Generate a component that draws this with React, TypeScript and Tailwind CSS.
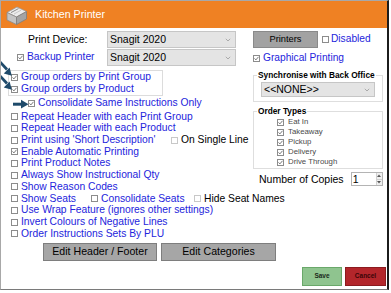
import React from "react";

function Box({ checked = false, light = false }: { checked?: boolean; light?: boolean }) {
  return (
    <svg width="7" height="7" viewBox="0 0 7 7" className="shrink-0">
      <rect x="0.5" y="0.5" width="6" height="6" fill="#fff" stroke={light ? "#c8c8c8" : "#8c8c8c"} />
      {checked && (
        <path d="M1.5 3.4 L2.9 4.9 L5.5 1.8" fill="none" stroke="#6a6a6a" strokeWidth="0.9" />
      )}
    </svg>
  );
}

function Opt({ label, checked = false }: { label: string; checked?: boolean }) {
  return (
    <div className="flex items-center gap-[3px] h-[11.7px]">
      <Box checked={checked} />
      <span className="text-[10.3px] leading-none text-[#2424dc] whitespace-nowrap">{label}</span>
    </div>
  );
}

function Chevron() {
  return (
    <svg width="6" height="4" viewBox="0 0 6 4" className="shrink-0">
      <path d="M0.8 0.8 L3 3 L5.2 0.8" fill="none" stroke="#9a9a9a" strokeWidth="0.8" />
    </svg>
  );
}

function Select({ value, w, h }: { value: string; w: string; h: string }) {
  return (
    <div
      className={`${w} ${h} shrink-0 flex items-center justify-between bg-[#e4e4e4] border border-[#c6c6c6] pl-[2px] pr-[4px] text-[10.5px] leading-none text-black`}
    >
      <span className="whitespace-nowrap">{value}</span>
      <Chevron />
    </div>
  );
}

function PrinterIcon() {
  return (
    <svg width="23" height="23" viewBox="0 0 23 23">
      <path d="M2 9.5 L12 4 L21.5 8.5 L11.5 14 Z" fill="#ececec" stroke="#9a9a9a" strokeWidth="0.8" strokeLinejoin="round" />
      <path d="M2 9.5 L11.5 14 L11.5 21.5 L2 17 Z" fill="#c4c4c4" stroke="#8a8a8a" strokeWidth="0.8" strokeLinejoin="round" />
      <path d="M11.5 14 L21.5 8.5 L21.5 16 L11.5 21.5 Z" fill="#a4a4a4" stroke="#7e7e7e" strokeWidth="0.8" strokeLinejoin="round" />
      <path d="M6 9.6 L13.5 5.6" stroke="#8a8a8a" strokeWidth="1" />
      <path d="M9 11 L16 7.2" stroke="#bdbdbd" strokeWidth="0.8" />
    </svg>
  );
}

function Arrows() {
  return (
    <svg width="30" height="50" viewBox="0 0 30 50" className="absolute left-0 top-[59px]">
      <path d="M-1 2 L6 9.5" stroke="#1e4a6a" strokeWidth="2.8" />
      <path d="M10.8 15.8 L8.6 7.6 L2.8 13.4 Z" fill="#1e4a6a" />
      <path d="M-1 16 L6 23.5" stroke="#1e4a6a" strokeWidth="2.8" />
      <path d="M10.8 29.8 L8.6 21.6 L2.8 27.4 Z" fill="#1e4a6a" />
      <path d="M12 44.2 L21 44.2" stroke="#1e4a6a" strokeWidth="3" />
      <path d="M27.5 44.2 L20 39.8 L20 48.6 Z" fill="#1e4a6a" />
    </svg>
  );
}

export default function App() {
  return (
    <div className="w-[391px] h-[293px] bg-white font-['Liberation_Sans',Arial,sans-serif]">
      <div className="relative w-[389px] h-[290px] bg-white border-l border-t border-[#a8a8a8] border-r-2 border-r-[#1c1c1c] border-b border-b-[#7a7a7a] flex flex-col">
        {/* title bar */}
        <div className="h-[27px] bg-[#ef8123] flex items-center pl-[4px] gap-[8px] shrink-0">
          <PrinterIcon />
          <span className="text-white text-[10.7px] leading-none ml-[-1px]">Kitchen Printer</span>
        </div>

        <div className="flex">
          {/* left column */}
          <div className="w-[252px] flex flex-col shrink-0">
            <div className="mt-[3px] h-[17px] flex items-center">
              <div className="w-[106px] shrink-0 pl-[27px] text-[10.5px] leading-none text-black">Print Device:</div>
              <Select value="Snagit 2020" w="w-[129px]" h="h-[17px]" />
            </div>
            <div className="mt-[1px] h-[17px] flex items-center">
              <div className="w-[106px] shrink-0 pl-[16px] flex items-center gap-[3px]">
                <Box checked />
                <span className="text-[10.3px] leading-none text-[#2424dc] whitespace-nowrap">Backup Printer</span>
              </div>
              <Select value="Snagit 2020" w="w-[129px]" h="h-[17px]" />
            </div>

            <div className="mt-[4px] ml-[7px] w-[155px] border border-[#dcdcdc] pl-[2px]">
              <div className="flex items-center gap-[3px] h-[12px]">
                <Box checked />
                <span className="text-[10.3px] leading-none text-[#2424dc] whitespace-nowrap">Group orders by Print Group</span>
              </div>
              <div className="flex items-center gap-[3px] h-[12px]">
                <Box checked />
                <span className="text-[10.3px] leading-none text-[#2424dc] whitespace-nowrap">Group orders by Product</span>
              </div>
            </div>

            <div className="mt-[1px] h-[12px] pl-[27px] flex items-center gap-[3px]">
              <Box checked />
              <span className="text-[10.3px] leading-none text-[#2424dc] whitespace-nowrap">Consolidate Same Instructions Only</span>
            </div>

            <div className="mt-[2px] pl-[10px] flex flex-col">
              <Opt label="Repeat Header with each Print Group" />
              <Opt label="Repeat Header with each Product" />
              <div className="flex items-center h-[11.7px]">
                <div className="w-[160px] shrink-0">
                  <Opt label="Print using 'Short Description'" />
                </div>
                <div className="flex items-center gap-[3px] shrink-0">
                  <Box light />
                  <span className="text-[10.3px] leading-none text-black whitespace-nowrap">On Single Line</span>
                </div>
              </div>
              <Opt label="Enable Automatic Printing" checked />
              <Opt label="Print Product Notes" />
              <Opt label="Always Show Instructional Qty" />
              <Opt label="Show Reason Codes" />
              <div className="flex items-center h-[11.7px]">
                <div className="w-[80px] shrink-0">
                  <Opt label="Show Seats" />
                </div>
                <div className="w-[103px] shrink-0">
                  <Opt label="Consolidate Seats" />
                </div>
                <div className="flex items-center gap-[3px] shrink-0">
                  <Box light />
                  <span className="text-[10.3px] leading-none text-black whitespace-nowrap">Hide Seat Names</span>
                </div>
              </div>
              <Opt label="Use Wrap Feature (ignores other settings)" />
              <Opt label="Invert Colours of Negative Lines" />
              <Opt label="Order Instructions Sets By PLU" />
            </div>

            <div className="mt-[3px] pl-[42px] flex gap-[4px]">
              <div className="w-[114px] h-[18px] shrink-0 bg-[#a6a6a6] border border-[#7e7e7e] flex items-center justify-center text-[10.6px] leading-none text-black">
                Edit Header / Footer
              </div>
              <div className="w-[115px] h-[18px] shrink-0 bg-[#a6a6a6] border border-[#7e7e7e] flex items-center justify-center text-[10.6px] leading-none text-black">
                Edit Categories
              </div>
            </div>
          </div>

          {/* right column */}
          <div className="w-[130px] flex flex-col shrink-0">
            <div className="mt-[3px] h-[17px] flex items-center">
              <div className="w-[65px] h-[17px] shrink-0 bg-[#a2a2a2] border border-[#8a8a8a] flex items-center justify-center text-[9.3px] leading-none text-black">
                Printers
              </div>
              <div className="ml-[4px] flex items-center gap-[2px]">
                <Box />
                <span className="text-[10.2px] leading-none text-[#2424dc]">Disabled</span>
              </div>
            </div>
            <div className="mt-[4px] h-[12px] flex items-center gap-[3px]">
              <Box checked />
              <span className="text-[10.2px] leading-none text-[#2424dc] whitespace-nowrap">Graphical Printing</span>
            </div>

            <fieldset className="mt-[6px] border border-[#dedede] pb-[4px]">
              <legend className="ml-[3px] px-[1px] text-[8.3px] font-bold leading-[10px] text-black whitespace-nowrap">
                Synchronise with Back Office
              </legend>
              <div className="mt-[2px] ml-[7px]">
                <Select value="<<NONE>>" w="w-[114px]" h="h-[15px]" />
              </div>
            </fieldset>

            <fieldset className="mt-[4px] border border-[#dedede] pb-[1px]">
              <legend className="ml-[3px] px-[1px] text-[8.3px] font-bold leading-[10px] text-black whitespace-nowrap">
                Order Types
              </legend>
              <div className="mt-[1px] pl-[23px] flex flex-col">
                {["Eat In", "Takeaway", "Pickup", "Delivery", "Drive Through"].map((t) => (
                  <div key={t} className="h-[10px] flex items-center gap-[4px]">
                    <Box checked />
                    <span className="text-[7.8px] leading-none text-[#4a4a4a] whitespace-nowrap">{t}</span>
                  </div>
                ))}
              </div>
            </fieldset>

            <div className="mt-[3px] h-[14px] flex items-center pl-[6px]">
              <span className="text-[10.5px] leading-none text-black whitespace-nowrap">Number of Copies</span>
              <div className="ml-[7px] w-[32px] h-[14px] shrink-0 border border-[#b4b4b4] bg-white flex items-center justify-between">
                <span className="pl-[1px] text-[10.5px] leading-none text-black">1</span>
                <div className="w-[6px] h-full flex flex-col border-l border-[#d0d0d0]">
                  <div className="flex-1 flex items-center justify-center bg-[#f0f0f0]">
                    <svg width="4" height="3" viewBox="0 0 4 3"><path d="M0 3 L2 0.5 L4 3 Z" fill="#555" /></svg>
                  </div>
                  <div className="flex-1 flex items-center justify-center bg-[#f0f0f0] border-t border-[#d0d0d0]">
                    <svg width="4" height="3" viewBox="0 0 4 3"><path d="M0 0 L2 2.5 L4 0 Z" fill="#555" /></svg>
                  </div>
                </div>
              </div>
            </div>
          </div>
        </div>

        {/* footer */}
        <div className="mt-[6px] flex justify-end gap-[3px] pr-[1px]">
          <div className="w-[40px] h-[19px] bg-[#8fc48f] border border-[#6aa86a] flex items-center justify-center text-[6.5px] font-bold leading-none text-[#1a2a1a]">
            Save
          </div>
          <div className="w-[41px] h-[19px] bg-[#b3262b] border border-[#8c1b1f] flex items-center justify-center text-[6.5px] font-bold leading-none text-[#3a0508]">
            Cancel
          </div>
        </div>

        <Arrows />
      </div>
    </div>
  );
}
